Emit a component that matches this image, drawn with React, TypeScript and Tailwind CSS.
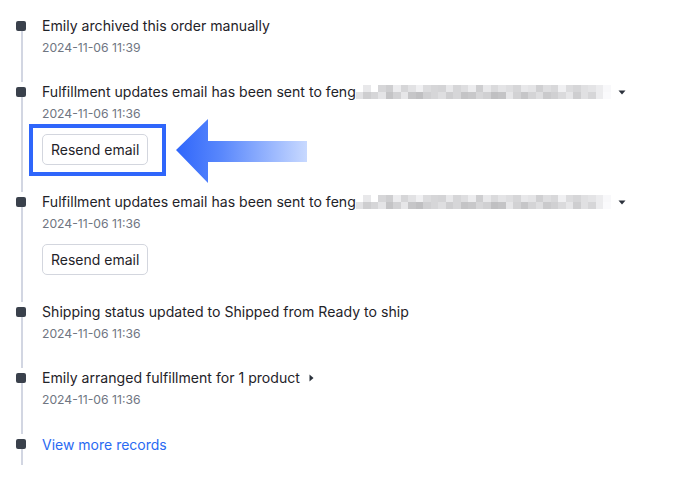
import React from "react";

// pixelated (redacted) email blocks: two rows of gray squares
const blurTop = [
  0, 232, 0, 214, 206, 236, 214, 226, 240, 220, 214, 212, 232, 214, 222, 236,
  206, 232, 218, 228, 222, 214, 232, 228, 208, 222, 216, 240, 220, 214, 224, 228, 236, 248,
];
const blurBottom = [
  226, 206, 214, 228, 196, 210, 230, 198, 192, 208, 214, 222, 206, 214, 196, 200,
  214, 208, 192, 196, 230, 210, 198, 212, 222, 202, 208, 218, 230, 206, 224, 214, 236, 250,
];

function Redacted() {
  return (
    <span className="inline-flex flex-col align-middle">
      {[blurTop, blurBottom].map((row, r) => (
        <span key={r} className="flex">
          {row.map((g, i) => (
            <span
              key={i}
              className="block w-[7.5px] h-[7px]"
              style={{ backgroundColor: g === 0 ? "transparent" : `rgb(${g},${g},${g + 2})` }}
            />
          ))}
        </span>
      ))}
    </span>
  );
}

function CaretDown() {
  return (
    <svg width="8" height="5" viewBox="0 0 8 5" className="ml-[7px] inline-block">
      <path d="M0.5 0.5h7L4 4.5z" fill="#2b313b" />
    </svg>
  );
}

function CaretRight() {
  return (
    <svg width="5" height="8" viewBox="0 0 5 8" className="ml-[9px] inline-block">
      <path d="M0.5 0.5v7L4.5 4z" fill="#2b313b" />
    </svg>
  );
}

function ResendButton() {
  return (
    <button className="h-[31px] px-[8px] rounded-[5px] border border-[#d3d6de] bg-white text-[14px] text-[#1f2329]">
      Resend email
    </button>
  );
}

type Item = {
  title: React.ReactNode;
  time?: string;
  button?: boolean;
  highlight?: boolean;
  link?: boolean;
};

const items: Item[] = [
  { title: "Emily archived this order manually", time: "2024-11-06 11:39" },
  {
    title: (
      <>
        Fulfillment updates email has been sent to feng
        <Redacted />
        <CaretDown />
      </>
    ),
    time: "2024-11-06 11:36",
    button: true,
    highlight: true,
  },
  {
    title: (
      <>
        Fulfillment updates email has been sent to feng
        <Redacted />
        <CaretDown />
      </>
    ),
    time: "2024-11-06 11:36",
    button: true,
  },
  { title: "Shipping status updated to Shipped from Ready to ship", time: "2024-11-06 11:36" },
  {
    title: (
      <>
        Emily arranged fulfillment for 1 product
        <CaretRight />
      </>
    ),
    time: "2024-11-06 11:36",
  },
  { title: "View more records", link: true },
];

export default function App() {
  return (
    <div
      className="w-[694px] h-[495px] bg-white pt-[16px] pl-[16px]"
      style={{ fontFamily: "Inter, 'Noto Sans', sans-serif" }}
    >
      {items.map((item, index) => (
        <div key={index} className="flex">
          {/* Timeline rail */}
          <div className="w-[26px] flex flex-col items-start shrink-0">
            <div className="w-[10px] h-[10px] mt-[5px] rounded-[2px] bg-[#3a414c]" />
            <div className="ml-[5px] w-[2px] flex-1 bg-[#d2d6e2]" />
          </div>

          {/* Content */}
          <div className={item.link ? "pb-[10px]" : item.button ? "pb-[27px]" : "pb-[24px]"}>
            {item.link ? (
              <a className="block text-[14px] leading-[20px] text-[#2a6af2] mt-[1px]">{item.title}</a>
            ) : (
              <div className="flex items-center text-[14.1px] leading-[20px] text-[#1f2329] whitespace-nowrap">
                {item.title}
              </div>
            )}
            {item.time && (
              <div className="mt-[2px] text-[12.2px] leading-[20px] text-[#6f7682]">{item.time}</div>
            )}
            {item.button && (
              <div className="relative mt-[10px] w-fit">
                <ResendButton />
                {item.highlight && (
                  <>
                    {/* annotation box */}
                    <div className="absolute left-[-13px] top-[-10px] w-[137px] h-[52px] border-[4px] border-[#2f66fb] pointer-events-none" />
                    {/* annotation arrow */}
                    <svg
                      width="132"
                      height="65"
                      viewBox="0 0 132 65"
                      className="absolute left-[134px] top-[-15px] pointer-events-none"
                    >
                      <defs>
                        <linearGradient id="arrowFill" x1="0" y1="0" x2="1" y2="0">
                          <stop offset="0" stopColor="#2f66fb" />
                          <stop offset="0.35" stopColor="#5a88fc" />
                          <stop offset="1" stopColor="#c8d9ff" />
                        </linearGradient>
                      </defs>
                      <path d="M0 31L32 0V22H131V43H32V64Z" fill="url(#arrowFill)" />
                    </svg>
                  </>
                )}
              </div>
            )}
          </div>
        </div>
      ))}
    </div>
  );
}
